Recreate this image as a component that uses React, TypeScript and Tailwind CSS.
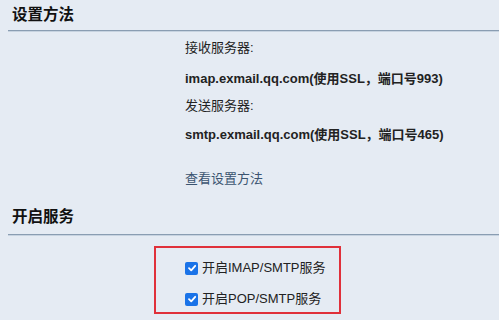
import React from "react";

const font = { fontFamily: '"Liberation Sans", Arial, "Noto Sans CJK SC", sans-serif' };

function Check() {
  return (
    <span className="inline-flex h-[13px] w-[13px] items-center justify-center rounded-[2px] bg-[#1a73e8]">
      <svg width="10" height="10" viewBox="0 0 10 10">
        <path d="M2 5.2 L4.2 7.3 L8.2 2.8" fill="none" stroke="#fff" strokeWidth="1.8" strokeLinecap="round" strokeLinejoin="round" />
      </svg>
    </span>
  );
}

export default function App() {
  return (
    <div className="h-[320px] w-[499px] overflow-hidden bg-[#e5ebf3] text-[#222]" style={font}>
      <div className="pl-[12px] pt-[5px] text-[15.5px] font-bold leading-[20px] text-[#111]">设置方法</div>
      <div className="ml-[8px] mt-[5px] h-[2px] border-t border-[#8a9db2] bg-[#c7d3e0]" />
      <div className="flex flex-col pl-[185px] text-[13px]">
        <div className="mt-[6px] leading-[20px]">接收服务器:</div>
        <div className="mt-[11px] font-bold leading-[20px]">imap.exmail.qq.com(使用SSL，端口号993)</div>
        <div className="mt-[7px] leading-[20px]">发送服务器:</div>
        <div className="mt-[9px] font-bold leading-[20px]">smtp.exmail.qq.com(使用SSL，端口号465)</div>
        <div className="mt-[24px] leading-[20px] text-[#3b5470]">查看设置方法</div>
      </div>
      <div className="mt-[18px] pl-[12px] text-[15.5px] font-bold leading-[20px] text-[#111]">开启服务</div>
      <div className="ml-[8px] mt-[7px] h-[2px] border-t border-[#8a9db2] bg-[#c7d3e0]" />
      <div className="ml-[154px] mt-[10px] flex h-[68px] w-[187px] flex-col gap-[11px] border-2 border-[#e0303a] pl-[29px] pt-[10px] text-[13px]">
        <label className="flex items-center gap-[4px] leading-[20px]">
          <Check />
          <span>开启IMAP/SMTP服务</span>
        </label>
        <label className="flex items-center gap-[4px] leading-[20px]">
          <Check />
          <span>开启POP/SMTP服务</span>
        </label>
      </div>
    </div>
  );
}
